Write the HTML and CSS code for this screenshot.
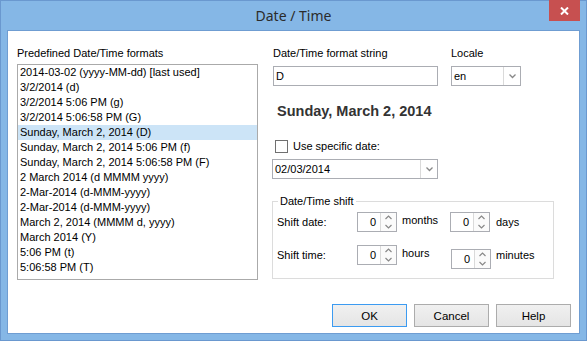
FILE: index.html
```html
<!DOCTYPE html>
<html lang="en">
<head>
    <meta charset="UTF-8">
    <title>Date / Time</title>
    <link rel="stylesheet" href="styles.css">
</head>
<body>
    <div class="window">
        <div class="titlebar">
            <span class="title">Date / Time</span>
            <button class="close-btn" aria-label="Close">
                <svg width="9" height="8" viewBox="0 0 9 8"><path d="M1 0.5 L8 7.5 M8 0.5 L1 7.5" stroke="#fff" stroke-width="2"/></svg>
            </button>
        </div>
        <div class="client">
            <div class="columns">
                <div class="left-col">
                    <div class="label">Predefined Date/Time formats</div>
                    <ul class="listbox">
                        <li>2014-03-02 (yyyy-MM-dd) [last used]</li>
                        <li>3/2/2014 (d)</li>
                        <li>3/2/2014 5:06 PM (g)</li>
                        <li>3/2/2014 5:06:58 PM (G)</li>
                        <li class="selected">Sunday, March 2, 2014 (D)</li>
                        <li>Sunday, March 2, 2014 5:06 PM (f)</li>
                        <li>Sunday, March 2, 2014 5:06:58 PM (F)</li>
                        <li>2 March 2014 (d MMMM yyyy)</li>
                        <li>2-Mar-2014 (d-MMM-yyyy)</li>
                        <li>2-Mar-2014 (d-MMM-yyyy)</li>
                        <li>March 2, 2014 (MMMM d, yyyy)</li>
                        <li>March 2014 (Y)</li>
                        <li>5:06 PM (t)</li>
                        <li>5:06:58 PM (T)</li>
                    </ul>
                </div>
                <div class="right-col">
                    <div class="field-row">
                        <div class="field">
                            <div class="label">Date/Time format string</div>
                            <div class="edit format-edit">D</div>
                        </div>
                        <div class="field">
                            <div class="label">Locale</div>
                            <div class="combo locale-combo">
                                <span class="combo-text">en</span>
                                <span class="drop-btn"><svg width="7" height="5" viewBox="0 0 7 5"><path d="M0.5 0.5 L3.5 3.5 L6.5 0.5" fill="none" stroke="#888" stroke-width="1.3"/></svg></span>
                            </div>
                        </div>
                    </div>
                    <div class="preview">Sunday, March 2, 2014</div>
                    <div class="check-row">
                        <span class="checkbox"></span>
                        <span>Use specific date:</span>
                    </div>
                    <div class="combo date-combo">
                        <span class="combo-text">02/03/2014</span>
                        <span class="drop-btn"><svg width="7" height="5" viewBox="0 0 7 5"><path d="M0.5 0.5 L3.5 3.5 L6.5 0.5" fill="none" stroke="#888" stroke-width="1.3"/></svg></span>
                    </div>
                    <fieldset class="shift-group">
                        <legend>Date/Time shift</legend>
                        <div class="shift-grid">
                            <span class="shift-label">Shift date:</span>
                            <div class="spin"><span class="spin-value">0</span><span class="spin-btns"><svg width="15" height="18" viewBox="0 0 15 18"><path d="M4.5 6 L7.5 3 L10.5 6 M4.5 12 L7.5 15 L10.5 12" fill="none" stroke="#888" stroke-width="1.2"/></svg></span></div>
                            <span class="unit unit-up">months</span>
                            <div class="spin"><span class="spin-value">0</span><span class="spin-btns"><svg width="15" height="18" viewBox="0 0 15 18"><path d="M4.5 6 L7.5 3 L10.5 6 M4.5 12 L7.5 15 L10.5 12" fill="none" stroke="#888" stroke-width="1.2"/></svg></span></div>
                            <span class="unit">days</span>

                            <span class="shift-label">Shift time:</span>
                            <div class="spin"><span class="spin-value">0</span><span class="spin-btns"><svg width="15" height="18" viewBox="0 0 15 18"><path d="M4.5 6 L7.5 3 L10.5 6 M4.5 12 L7.5 15 L10.5 12" fill="none" stroke="#888" stroke-width="1.2"/></svg></span></div>
                            <span class="unit unit-up">hours</span>
                            <div class="spin spin-low"><span class="spin-value">0</span><span class="spin-btns"><svg width="15" height="18" viewBox="0 0 15 18"><path d="M4.5 6 L7.5 3 L10.5 6 M4.5 12 L7.5 15 L10.5 12" fill="none" stroke="#888" stroke-width="1.2"/></svg></span></div>
                            <span class="unit">minutes</span>
                        </div>
                    </fieldset>
                </div>
            </div>
            <div class="buttons">
                <button class="btn default">OK</button>
                <button class="btn">Cancel</button>
                <button class="btn">Help</button>
            </div>
        </div>
    </div>
</body>
</html>
```

FILE: styles.css
```css
body {
    margin: 0;
    font-family: 'Liberation Sans', Arial, sans-serif;
    font-size: 11px;
    color: #000;
    background: #fff;
}
.window {
    width: 587px;
    height: 341px;
    box-sizing: border-box;
    border: 1px solid #6a98cf;
    background: #85b7e6;
    display: flex;
    flex-direction: column;
}
.titlebar {
    height: 29px;
    display: flex;
    align-items: flex-start;
    justify-content: center;
    position: relative;
}
.title {
    font-family: 'Noto Sans', sans-serif;
    font-size: 14px;
    color: #2b2b2b;
    line-height: 29px;
}
.close-btn {
    position: absolute;
    right: 6px;
    top: -1px;
    width: 31px;
    height: 21px;
    border: none;
    padding: 0;
    background: #c75050;
    display: flex;
    align-items: center;
    justify-content: center;
}
.client {
    flex: 1;
    margin: 0 6px 6px 6px;
    border: 1px solid #6f9dd2;
    background: #fff;
    display: flex;
    flex-direction: column;
}
.columns {
    display: flex;
    gap: 14px;
    padding: 15px 0 0 9px;
}
.label {
    line-height: 15px;
    height: 15px;
}
.left-col {
    width: 241px;
}
.listbox {
    list-style: none;
    margin: 3px 0 0 0;
    padding: 0;
    height: 216px;
    box-sizing: border-box;
    border: 1px solid #aaa;
    overflow: hidden;
    font-size: 11px;
}
.listbox li {
    height: 15px;
    line-height: 15px;
    padding-left: 2px;
}
.listbox li.selected {
    background: #cce4f7;
}
.right-col {
    width: 282px;
}
.field-row {
    display: flex;
    gap: 13px;
    padding-left: 1px;
}
.field .label {
    margin-bottom: 5px;
}
.edit, .combo {
    height: 20px;
    box-sizing: border-box;
    border: 1px solid #abadb3;
    font-size: 11px;
    line-height: 18px;
}
.format-edit {
    width: 165px;
    padding-left: 2px;
}
.combo {
    display: flex;
}
.combo-text {
    flex: 1;
    padding-left: 2px;
}
.drop-btn {
    width: 16px;
    border-left: 1px solid #dadada;
    display: flex;
    align-items: center;
    justify-content: center;
}
.locale-combo {
    width: 70px;
}
.preview {
    margin-top: 16px;
    padding-left: 5px;
    font-weight: bold;
    font-size: 14.5px;
    line-height: 18px;
    color: #333;
}
.check-row {
    margin-top: 19px;
    padding-left: 3px;
    height: 14px;
    display: flex;
    align-items: center;
    gap: 5px;
}
.checkbox {
    width: 11px;
    height: 11px;
    border: 1px solid #707070;
    background: #fff;
}
.date-combo {
    margin-top: 6px;
    width: 166px;
}
.shift-group {
    margin: 15px 0 0 0;
    width: 282px;
    height: 85px;
    box-sizing: border-box;
    border: 1px solid #dcdcdc;
    padding: 3px 4px 0 4px;
}
.shift-group legend {
    padding: 0 2px;
    margin-left: 1px;
    line-height: 15px;
}
.shift-grid {
    display: grid;
    grid-template-columns: 80px 40px 53px 40px auto;
    column-gap: 0;
    row-gap: 13px;
    align-items: center;
}
.unit {
    padding-left: 6px;
}
.unit-up {
    margin-top: -4px;
    padding-left: 5px;
}
.spin {
    width: 40px;
    height: 20px;
    box-sizing: border-box;
    border: 1px solid #abadb3;
    display: flex;
}
.spin-low {
    margin: 4px 0 -4px 1px;
}
.spin-value {
    flex: 1;
    text-align: right;
    padding-right: 4px;
    line-height: 18px;
}
.spin-btns {
    width: 15px;
    border-left: 1px solid #dadada;
    background: #fbfbfb;
    display: flex;
    align-items: center;
}
.buttons {
    margin-top: auto;
    display: flex;
    justify-content: flex-end;
    gap: 7px;
    padding: 0 8px 6px 0;
}
.btn {
    width: 75px;
    height: 23px;
    box-sizing: border-box;
    border: 1px solid #acacac;
    background: linear-gradient(#f0f0f0, #e5e5e5);
    font-family: 'Liberation Sans', Arial, sans-serif;
    font-size: 11.5px;
    color: #000;
    padding: 0;
}
.btn.default {
    border-color: #3c9bf1;
}
```
